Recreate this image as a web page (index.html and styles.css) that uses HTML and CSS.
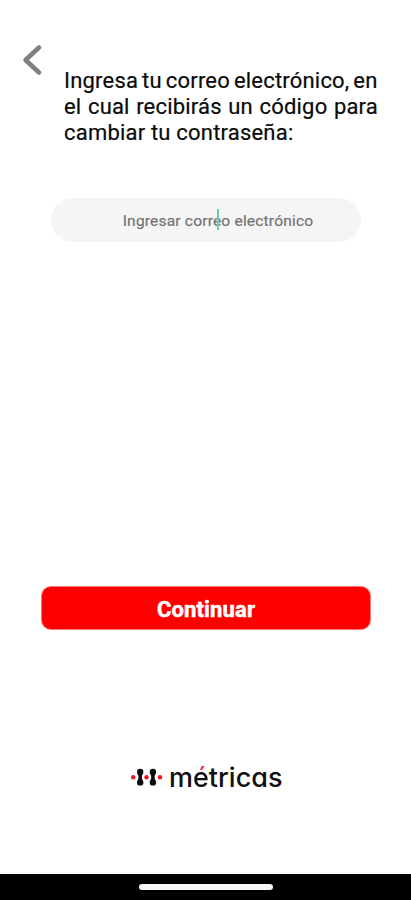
FILE: index.html
```html
<!DOCTYPE html>
<html lang="es">
<head>
  <meta charset="UTF-8">
  <title>Cambiar contraseña</title>
  <link rel="stylesheet" href="styles.css">
</head>
<body>

<div class="header">
  <svg class="back" width="22" height="32" viewBox="0 0 22 32">
    <path d="M18 3.5 L4.5 16 L18 28.5"/>
  </svg>
  <p class="message">
    <span class="line tight">Ingresa tu correo electrónico, en</span>
    <span class="line wide">el cual recibirás un código para</span>
    <span class="line">cambiar tu contraseña:</span>
  </p>
</div>

<div class="field">
  <span class="hint">Ingresar correo electrónico</span>
  <span class="cursor"></span>
</div>

<button class="continue-btn">Continuar</button>

<div class="logo">
  <svg class="logo-icon" width="34" height="20" viewBox="0 0 34 20">
    <g class="bones">
      <circle cx="10.2" cy="5" r="3.2"/>
      <circle cx="10.2" cy="15.4" r="3.2"/>
      <path d="M7.8 6 Q9.4 10 7.8 15 H12.6 Q11 10 12.6 6 Z"/>
      <circle cx="22.9" cy="5" r="3.2"/>
      <circle cx="22.9" cy="15.4" r="3.2"/>
      <path d="M20.5 6 Q22.1 10 20.5 15 H25.3 Q23.7 10 25.3 6 Z"/>
    </g>
    <g class="dots">
      <circle cx="3.2" cy="10.3" r="2.2"/>
      <circle cx="16.5" cy="10.3" r="2.2"/>
      <circle cx="30" cy="10.3" r="2.2"/>
    </g>
  </svg>
  <span class="logo-name">m<span class="accented">é</span>tricas</span>
</div>

<div class="nav-bar">
  <div class="handle"></div>
</div>

</body>
</html>
```

FILE: styles.css
```css
body {
  font-family: Roboto, Arial, sans-serif;
  display: flex;
  flex-direction: column;
  height: 900px;
  margin: 0;
  background: #fff;
  overflow: hidden;
}
.header {
  display: flex;
  align-items: flex-start;
  padding: 44px 33px 0 21px;
}
.back {
  flex: none;
}
.back path {
  fill: none;
  stroke: #808080;
  stroke-width: 4.6;
  stroke-linecap: round;
  stroke-linejoin: round;
}
.message {
  flex: 1;
  min-width: 0;
  margin: 24px 0 0 21px;
  color: #0a0a0a;
  font-size: 22px;
  line-height: 26px;
  letter-spacing: 0.2px;
  -webkit-text-stroke: 0.2px #0a0a0a;
}
.line {
  display: block;
  white-space: nowrap;
}
.tight {
  word-spacing: -1.7px;
}
.wide {
  white-space: normal;
  text-align-last: justify;
}
.field {
  position: relative;
  display: flex;
  align-items: center;
  justify-content: center;
  height: 44px;
  margin: 52px 50px 0 51px;
  border-radius: 22px;
  background: #f5f5f5;
}
.hint {
  margin: 2px 0 0 24px;
  color: #737373;
  font-size: 15.5px;
  letter-spacing: 0.2px;
  -webkit-text-stroke: 0.2px #737373;
}
/* text cursor drawn over the hint */
.cursor {
  position: absolute;
  left: 166px;
  top: 11px;
  width: 2px;
  height: 21px;
  background: #6fc9bb;
}
.continue-btn {
  height: 44px;
  margin: 344px 40px 0 41px;
  padding: 3px 0 0;
  border: 1px solid #ff7777;
  border-radius: 10px;
  background: #f00;
  color: #fff;
  font-family: inherit;
  font-size: 22px;
  font-weight: 700;
  letter-spacing: 0.15px;
  -webkit-text-stroke: 0.5px #fff;
}
.logo {
  display: flex;
  align-items: center;
  height: 34px;
  margin: 130px 0 0 130px;
}
.logo-icon {
  flex: none;
}
.bones {
  fill: #0c0c0c;
}
.dots {
  fill: #f4121f;
}
.logo-name {
  margin-left: 5px;
  color: #111;
  font-family: Inter, sans-serif;
  font-size: 27px;
  font-weight: 500;
  font-feature-settings: "cv11";
}
/* red accent above the e */
.accented {
  background: linear-gradient(#f4333f 11px, #111 11px);
  -webkit-background-clip: text;
  background-clip: text;
  color: transparent;
}
.nav-bar {
  display: flex;
  justify-content: center;
  height: 26px;
  margin-top: auto;
  background: #000;
}
.handle {
  width: 134px;
  height: 6px;
  margin-top: 10px;
  border-radius: 3px;
  background: #f7f7f7;
}
```
